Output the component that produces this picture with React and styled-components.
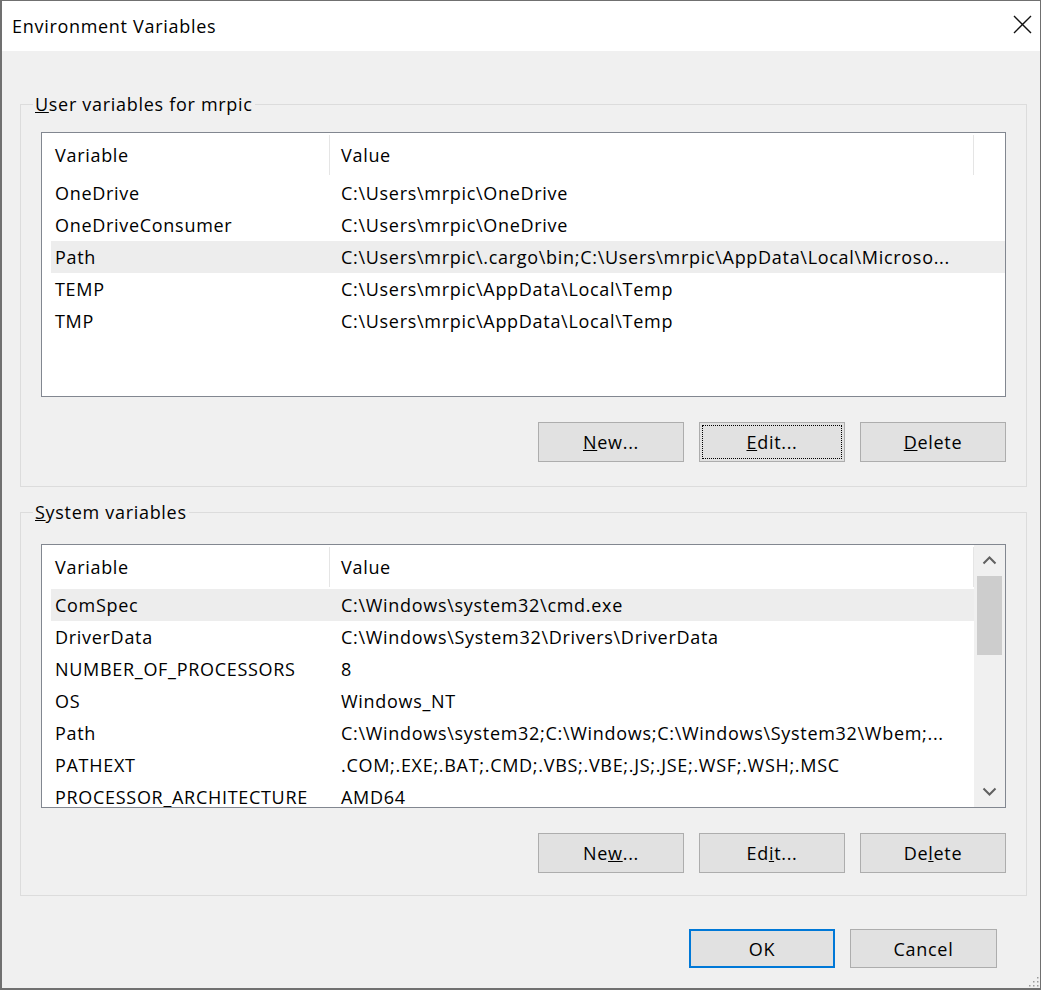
import React from "react";
import styled, { createGlobalStyle } from "styled-components";

const GlobalStyle = createGlobalStyle`
  html, body {
    margin: 0;
    padding: 0;
    background: #f0f0f0;
    overflow: hidden;
  }
  body {
    font-family: "Open Sans", "Noto Sans", "Liberation Sans", sans-serif;
    font-size: 18px;
    letter-spacing: 0.7px;
    color: #000;
  }
`;

const Window = styled.div`
  position: relative;
  width: 1041px;
  height: 990px;
  box-sizing: border-box;
  border: 1px solid #707070;
  border-left-width: 2px;
  border-bottom-width: 2px;
  background: #f0f0f0;
  display: flex;
  flex-direction: column;
`;

const TitleBar = styled.div`
  height: 50px;
  flex-shrink: 0;
  background: #fff;
  display: flex;
  align-items: center;
  justify-content: space-between;
  padding: 0 8px 0 10px;
`;

const Title = styled.div`
  line-height: 24px;
`;

const CloseButton = styled.div`
  width: 19px;
  height: 19px;
  display: flex;
  margin-top: -3px;
`;

const Content = styled.div`
  flex: 1;
  display: flex;
  flex-direction: column;
  padding: 41px 13px 0 18px;
`;

const GroupBox = styled.fieldset`
  margin: ${({ $top }) => $top}px 0 0;
  padding: ${({ $padTop }) => $padTop}px 20px ${({ $padBottom }) => $padBottom}px;
  border: 1px solid #dcdcdc;
  min-width: 0;
`;

const Legend = styled.legend`
  margin-left: -8px;
  padding: 0 2px;
  line-height: 24px;
`;

const ListBox = styled.div`
  height: ${({ $h }) => $h}px;
  box-sizing: border-box;
  border: 1px solid #828790;
  background: #fff;
  display: flex;
  overflow: hidden;
`;

const ListBody = styled.div`
  flex: 1;
  min-width: 0;
  padding-left: 9px;
  overflow: hidden;
`;

const HeaderRow = styled.div`
  display: grid;
  grid-template-columns: 279px 644px;
  height: 44px;
  box-sizing: border-box;
  padding: 2px 0;
`;

const HeadCell = styled.div`
  display: flex;
  align-items: center;
  padding-left: ${({ $pad }) => $pad}px;
  border-right: 1px solid #e5e5e5;
  white-space: nowrap;
`;

const Row = styled.div`
  display: grid;
  grid-template-columns: 279px 644px;
  height: 32px;
  background: ${({ $selected }) => ($selected ? "#ededed" : "transparent")};
`;

const Cell = styled.div`
  display: flex;
  align-items: center;
  padding-left: ${({ $pad }) => $pad}px;
  white-space: nowrap;
  overflow: hidden;
`;

const ScrollBar = styled.div`
  width: 31px;
  flex-shrink: 0;
  background: #f0f0f0;
  display: flex;
  flex-direction: column;
`;

const ScrollArrow = styled.div`
  height: 31px;
  flex-shrink: 0;
  display: flex;
  align-items: center;
  justify-content: center;
`;

const ScrollTrack = styled.div`
  flex: 1;
  padding: 0 3px;
`;

const Thumb = styled.div`
  height: 79px;
  background: #cdcdcd;
`;

const ButtonRow = styled.div`
  display: flex;
  justify-content: flex-end;
  gap: 15px;
  margin-top: 25px;
  padding-right: ${({ $right }) => $right || 0}px;
`;

const Button = styled.div`
  width: ${({ $w }) => $w || 146}px;
  height: ${({ $h }) => $h || 40}px;
  box-sizing: border-box;
  display: flex;
  align-items: center;
  justify-content: center;
  background: #e1e1e1;
  border: ${({ $default }) => ($default ? "2px solid #0078d7" : "1px solid #adadad")};
  outline: ${({ $focus }) => ($focus ? "1px dotted #000" : "none")};
  outline-offset: -4px;
  white-space: nowrap;
`;

const Footer = styled(ButtonRow)`
  margin-top: 33px;
`;

const Grip = styled.svg`
  position: absolute;
  right: 1px;
  bottom: 1px;
`;

const Chevron = ({ down }) => (
  <svg width="15" height="9" viewBox="0 0 15 9">
    <polyline
      points={down ? "1.5,1.5 7.5,7.5 13.5,1.5" : "1.5,7.5 7.5,1.5 13.5,7.5"}
      fill="none"
      stroke="#606060"
      strokeWidth="2"
    />
  </svg>
);

const userVars = [
  ["OneDrive", "C:\\Users\\mrpic\\OneDrive"],
  ["OneDriveConsumer", "C:\\Users\\mrpic\\OneDrive"],
  ["Path", "C:\\Users\\mrpic\\.cargo\\bin;C:\\Users\\mrpic\\AppData\\Local\\Microso..."],
  ["TEMP", "C:\\Users\\mrpic\\AppData\\Local\\Temp"],
  ["TMP", "C:\\Users\\mrpic\\AppData\\Local\\Temp"],
];

const systemVars = [
  ["ComSpec", "C:\\Windows\\system32\\cmd.exe"],
  ["DriverData", "C:\\Windows\\System32\\Drivers\\DriverData"],
  ["NUMBER_OF_PROCESSORS", "8"],
  ["OS", "Windows_NT"],
  ["Path", "C:\\Windows\\system32;C:\\Windows;C:\\Windows\\System32\\Wbem;..."],
  ["PATHEXT", ".COM;.EXE;.BAT;.CMD;.VBS;.VBE;.JS;.JSE;.WSF;.WSH;.MSC"],
  ["PROCESSOR_ARCHITECTURE", "AMD64"],
];

const VariableList = ({ rows, selected, height, scroll }) => (
  <ListBox $h={height}>
    <ListBody>
      <HeaderRow>
        <HeadCell $pad={4}>Variable</HeadCell>
        <HeadCell $pad={11}>Value</HeadCell>
      </HeaderRow>
      {rows.map(([name, value], i) => (
        <Row key={name + i} $selected={i === selected}>
          <Cell $pad={4}>{name}</Cell>
          <Cell $pad={11}>{value}</Cell>
        </Row>
      ))}
    </ListBody>
    {scroll && (
      <ScrollBar>
        <ScrollArrow>
          <Chevron />
        </ScrollArrow>
        <ScrollTrack>
          <Thumb />
        </ScrollTrack>
        <ScrollArrow>
          <Chevron down />
        </ScrollArrow>
      </ScrollBar>
    )}
  </ListBox>
);

export default function App() {
  return (
    <>
      <GlobalStyle />
      <Window>
        <TitleBar>
          <Title>Environment Variables</Title>
          <CloseButton>
            <svg width="19" height="19" viewBox="0 0 19 19">
              <path d="M1 1L18 18M18 1L1 18" stroke="#111" strokeWidth="1.4" />
            </svg>
          </CloseButton>
        </TitleBar>
        <Content>
          <GroupBox $top={0} $padTop={16} $padBottom={24}>
            <Legend>
              <u>U</u>ser variables for mrpic
            </Legend>
            <VariableList rows={userVars} selected={2} height={265} />
            <ButtonRow>
              <Button>
                <span><u>N</u>ew...</span>
              </Button>
              <Button $focus>
                <span><u>E</u>dit...</span>
              </Button>
              <Button>
                <span><u>D</u>elete</span>
              </Button>
            </ButtonRow>
          </GroupBox>
          <GroupBox $top={13} $padTop={20} $padBottom={22}>
            <Legend>
              <u>S</u>ystem variables
            </Legend>
            <VariableList rows={systemVars} selected={0} height={264} scroll />
            <ButtonRow>
              <Button>
                <span>Ne<u>w</u>...</span>
              </Button>
              <Button>
                <span>Ed<u>i</u>t...</span>
              </Button>
              <Button>
                <span>De<u>l</u>ete</span>
              </Button>
            </ButtonRow>
          </GroupBox>
          <Footer $right={30}>
            <Button $default $h={39}>OK</Button>
            <Button $h={39} $w={147}>Cancel</Button>
          </Footer>
        </Content>
        <Grip width="12" height="12" viewBox="0 0 12 12">
          {[
            [10, 2],
            [10, 6],
            [6, 6],
            [10, 10],
            [6, 10],
            [2, 10],
          ].map(([x, y]) => (
            <rect key={`${x}-${y}`} x={x} y={y} width="1.5" height="1.5" fill="#9a9a9a" />
          ))}
        </Grip>
      </Window>
    </>
  );
}
